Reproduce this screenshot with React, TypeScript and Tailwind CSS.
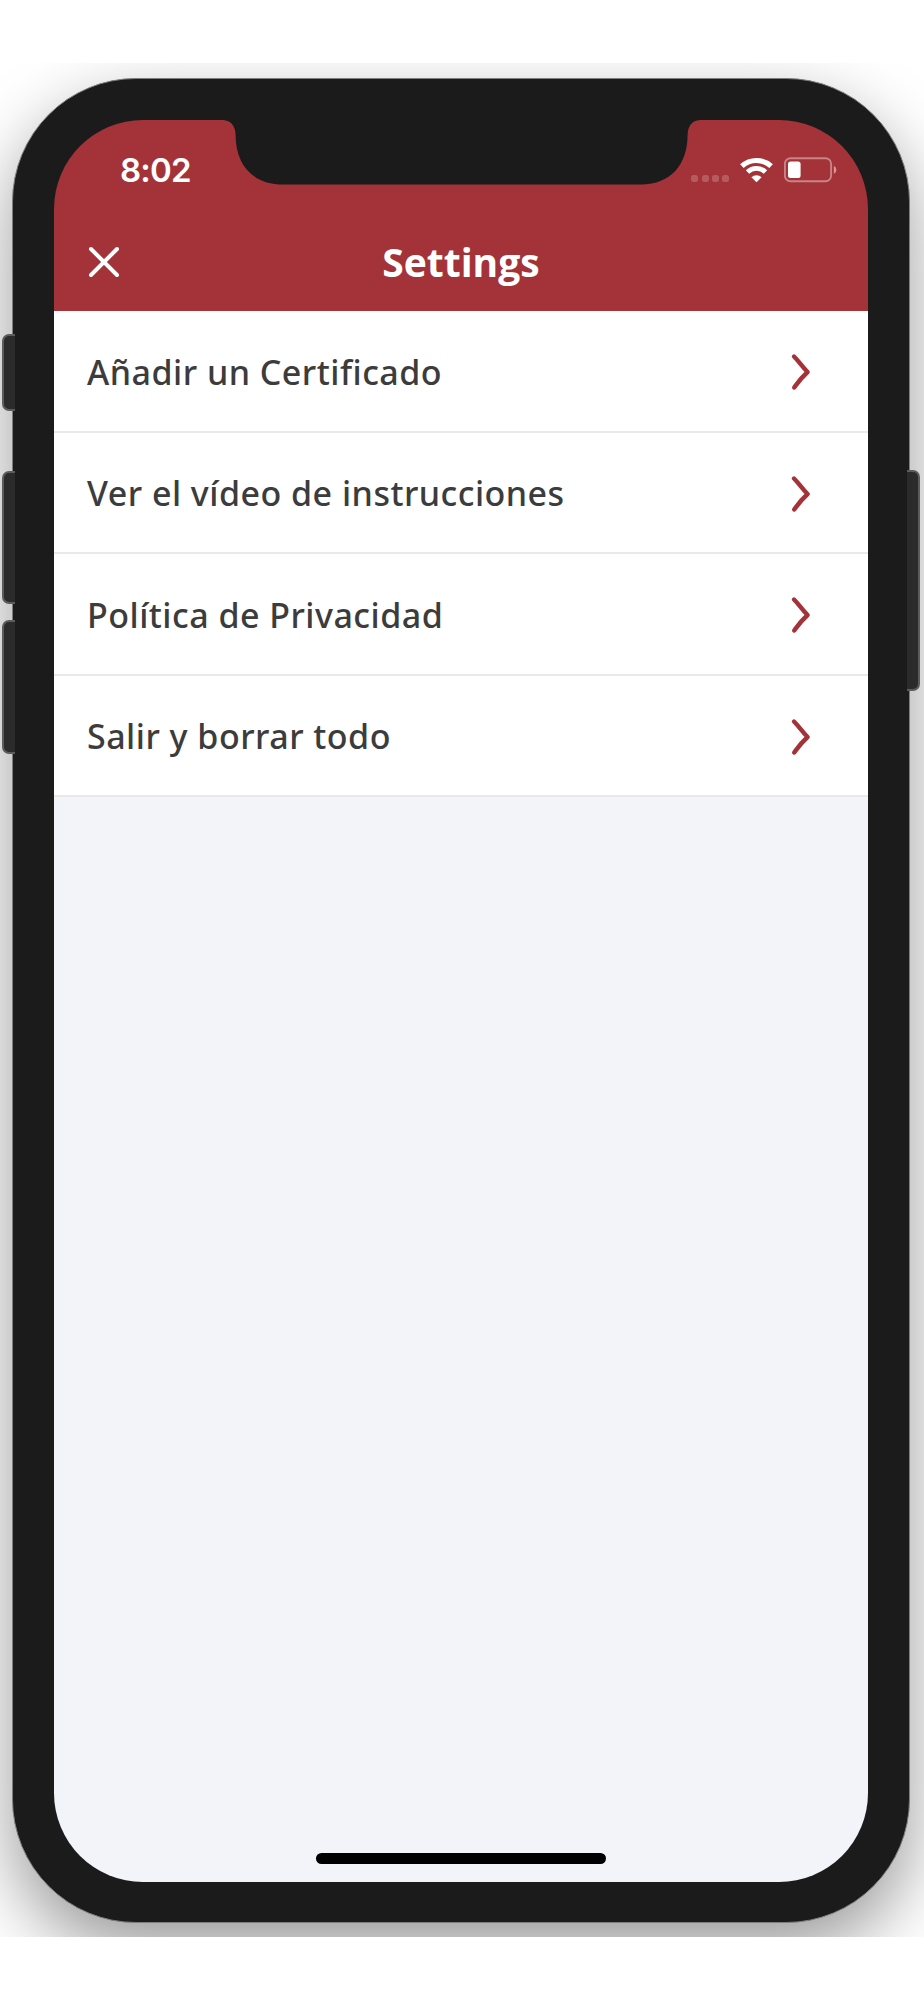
const menuItems = [
  "Añadir un Certificado",
  "Ver el vídeo de instrucciones",
  "Política de Privacidad",
  "Salir y borrar todo",
];

function Notch() {
  return (
    <svg
      className="absolute top-0 left-[166px]"
      width="484"
      height="65"
      viewBox="220 120 484 65"
      fill="#1b1b1b"
    >
      <path d="M220 119H704V120H700Q688 121 687.6 135C687.6 164 671 184.5 641 184.5H283C252 184.5 235.6 164 235.6 135Q235 121 223 120H220Z" />
    </svg>
  );
}

function WifiIcon() {
  return (
    <svg width="34" height="26" viewBox="0 0 34 26" fill="none" stroke="white">
      <path d="M1.9 9.2A21.5 21.5 0 0 1 31.1 9.2" strokeWidth="5.2" />
      <path d="M7.5 15A13 13 0 0 1 25.5 15" strokeWidth="4.8" />
      <path d="M16.5 25.2L11.4 20.2A7.4 7.4 0 0 1 21.6 20.2Z" fill="white" stroke="none" />
    </svg>
  );
}

function BatteryIcon() {
  return (
    <svg width="53" height="26" viewBox="0 0 53 26" fill="none">
      <rect x="0.9" y="1.2" width="46.2" height="23" rx="5.5" stroke="white" strokeOpacity="0.4" strokeWidth="1.9" />
      <rect x="4" y="4.5" width="12.6" height="16.5" rx="2.5" fill="white" />
      <path d="M49.8 8.8Q52.4 10 52.4 12.9T49.8 17Z" fill="white" fillOpacity="0.5" />
    </svg>
  );
}

function StatusBar() {
  return (
    <div className="flex h-[102px] items-start pt-[37px] pr-[31px] pl-[66px]">
      <span className="font-['Inter',sans-serif] text-[33px] leading-[26px] font-semibold tracking-[-0.8px] text-white">
        8:02
      </span>
      <div className="ml-auto flex">
        <div className="mt-[18px] mr-[11px] flex gap-[3.2px]">
          <span className="size-[7px] rounded-[2.5px] bg-white/20" />
          <span className="size-[7px] rounded-[2.5px] bg-white/20" />
          <span className="size-[7px] rounded-[2.5px] bg-white/20" />
          <span className="size-[7px] rounded-[2.5px] bg-white/20" />
        </div>
        <WifiIcon />
        <div className="ml-[10px]">
          <BatteryIcon />
        </div>
      </div>
    </div>
  );
}

function NavBar() {
  return (
    <div className="grid h-[89px] grid-cols-[100px_1fr_100px] items-center pb-[9px]">
      <button className="pl-[34px]" aria-label="Close">
        <svg width="32" height="32" viewBox="0 0 32 32" stroke="white" strokeWidth="4" strokeLinecap="round">
          <path d="M3 3L29 29M29 3L3 29" />
        </svg>
      </button>
      <h1 className="text-center text-[39px] leading-[50px] font-bold whitespace-nowrap text-white">
        Settings
      </h1>
    </div>
  );
}

function MenuRow({ label }: { label: string }) {
  return (
    <li className="flex h-[121.5px] items-center justify-between border-b-2 border-[#e9e9ea] bg-white pt-[2.5px] pr-[56px] pl-[33px]">
      <span className="font-['Noto_Sans',sans-serif] text-[34px] font-medium tracking-[0.48px] whitespace-nowrap text-[#3c3c3c]">
        {label}
      </span>
      <svg width="22" height="38" viewBox="0 0 22 38" fill="none" stroke="#a33338" strokeWidth="4.4" strokeLinecap="round" strokeLinejoin="round">
        <path d="M4 3.5C9.5 9 11 12.5 17.6 19C11 25 9 28 4.2 34.5" />
      </svg>
    </li>
  );
}

export default function App() {
  return (
    <div className="h-[2000px] w-[924px] bg-white pt-[63px] font-['Open_Sans',sans-serif]">
      <div className="relative h-[1874px] overflow-hidden px-[12px] pt-[15px]">
        <div className="h-[1845px] w-[898px] rounded-[124px] border border-[#7d7e7e] bg-[#1b1b1b] px-[41px] pt-[41px] shadow-[0_28px_70px_rgba(0,0,0,0.4)]">
          <div className="relative flex h-[1762px] flex-col overflow-hidden rounded-[89px]">
            <header className="bg-[#a33338]">
              <StatusBar />
              <NavBar />
            </header>
            <Notch />
            <ul>
              {menuItems.map((label) => (
                <MenuRow key={label} label={label} />
              ))}
            </ul>
            <div className="flex flex-1 items-end justify-center bg-[#f3f4fa] pb-[18px]">
              <div className="h-[11px] w-[290px] rounded-full bg-black" />
            </div>
          </div>
        </div>

        {/* Hardware buttons */}
        <div className="absolute top-[271px] left-[2px] h-[77px] w-[13px] rounded-l-[7px] border-y-2 border-l-2 border-[#5c5c5c] bg-[#2b2b2b]" />
        <div className="absolute top-[408px] left-[2px] h-[133px] w-[13px] rounded-l-[7px] border-y-2 border-l-2 border-[#5c5c5c] bg-[#2b2b2b]" />
        <div className="absolute top-[557px] left-[2px] h-[134px] w-[13px] rounded-l-[7px] border-y-2 border-l-2 border-[#5c5c5c] bg-[#2b2b2b]" />
        <div className="absolute top-[407px] right-[4px] h-[221px] w-[13px] rounded-r-[7px] border-y-2 border-r-2 border-[#5c5c5c] bg-[#2b2b2b]" />
      </div>
    </div>
  );
}
